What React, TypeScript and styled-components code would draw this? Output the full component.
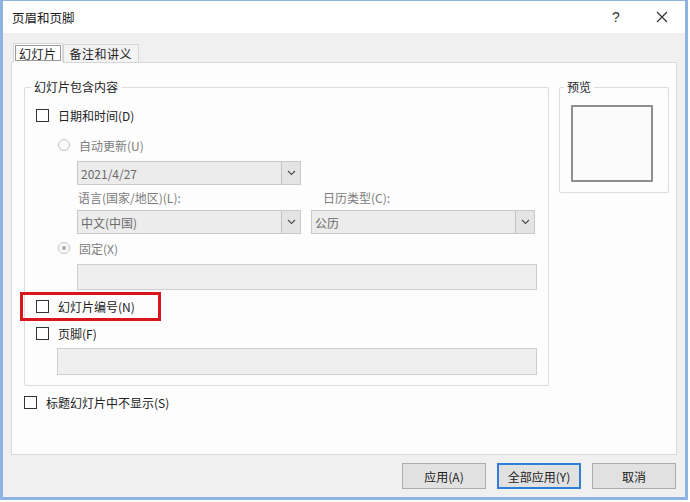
import React from 'react'
import styled, { createGlobalStyle } from 'styled-components'

const GlobalStyle = createGlobalStyle`
  html, body {
    margin: 0;
    padding: 0;
    background: #ffffff;
  }
  body {
    font-family: "Noto Sans CJK SC", "Liberation Sans", sans-serif;
    font-size: 12px;
    color: #262626;
  }
`

const Chevron = () => (
  <svg width="9" height="6" viewBox="0 0 9 6">
    <path d="M1 1 L4.5 4.5 L8 1" fill="none" stroke="#4a4a4a" strokeWidth="1.1" />
  </svg>
)

const App = () => {
  return (
    <>
      <GlobalStyle />
      <Window>
        <TitleBar>
          <Title>页眉和页脚</Title>
          <TitleActions>
            <TitleButton>?</TitleButton>
            <TitleButton>
              <svg width="12" height="12" viewBox="0 0 12 12">
                <path d="M1 1 L11 11 M11 1 L1 11" stroke="#333" strokeWidth="1.2" />
              </svg>
            </TitleButton>
          </TitleActions>
        </TitleBar>
        <Body>
          <TabStrip>
            <Tab active>幻灯片</Tab>
            <Tab>备注和讲义</Tab>
          </TabStrip>
          <Panel>
            <GroupRow>
              <MainGroup>
                <Legend offset={-5}>幻灯片包含内容</Legend>
                <CheckRow top={10}>
                  <CheckBox />
                  <Label>日期和时间(D)</Label>
                </CheckRow>
                <RadioRow top={10}>
                  <Radio />
                  <Label disabled>自动更新(U)</Label>
                </RadioRow>
                <SelectWrap top={6}>
                  <Select width={224}>
                    <SelectText>2021/4/27</SelectText>
                    <DropButton><Chevron /></DropButton>
                  </Select>
                </SelectWrap>
                <PairRow top={4}>
                  <SmallLabel width={234}>语言(国家/地区)(L):</SmallLabel>
                  <SmallLabel>日历类型(C):</SmallLabel>
                </PairRow>
                <PairRow top={4}>
                  <Select width={224}>
                    <SelectText>中文(中国)</SelectText>
                    <DropButton><Chevron /></DropButton>
                  </Select>
                  <Select width={224}>
                    <SelectText>公历</SelectText>
                    <DropButton><Chevron /></DropButton>
                  </Select>
                </PairRow>
                <RadioRow top={4}>
                  <Radio checked />
                  <Label disabled>固定(X)</Label>
                </RadioRow>
                <TextField indent={41} top={6} height={26} />
                <Highlighted>
                  <CheckRow top={0}>
                    <CheckBox />
                    <Label>幻灯片编号(N)</Label>
                  </CheckRow>
                  <RedMark />
                </Highlighted>
                <CheckRow top={7}>
                  <CheckBox />
                  <Label>页脚(F)</Label>
                </CheckRow>
                <TextField indent={21} top={5} height={27} />
              </MainGroup>
              <PreviewGroup>
                <Legend offset={-7}>预览</Legend>
                <PreviewBox />
              </PreviewGroup>
            </GroupRow>
            <CheckRow top={6}>
              <CheckBox />
              <Label>标题幻灯片中不显示(S)</Label>
            </CheckRow>
          </Panel>
          <ButtonRow>
            <Button>应用(A)</Button>
            <Button primary>全部应用(Y)</Button>
            <Button>取消</Button>
          </ButtonRow>
        </Body>
      </Window>
    </>
  )
}

export default App

const Window = styled.div`
  width: 688px;
  height: 500px;
  box-sizing: border-box;
  border: 1px solid #8db4e2;
  border-left-width: 3px;
  border-right-width: 3px;
  border-bottom-width: 3px;
  background: #f0f0f0;
  display: flex;
  flex-direction: column;
`

const TitleBar = styled.div`
  height: 32px;
  background: #ffffff;
  display: flex;
  align-items: center;
  justify-content: space-between;
  padding-left: 9px;
  flex-shrink: 0;
`

const Title = styled.div`
  font-size: 12.5px;
  color: #1a1a1a;
`

const TitleActions = styled.div`
  display: flex;
  align-items: center;
  height: 100%;
`

const TitleButton = styled.div`
  width: 46px;
  height: 100%;
  display: flex;
  align-items: center;
  justify-content: center;
  font-family: "Liberation Sans", sans-serif;
  font-size: 14px;
  color: #333;
`

const Body = styled.div`
  flex: 1;
  padding: 10px 8px 0 8px;
  display: flex;
  flex-direction: column;
`

const TabStrip = styled.div`
  display: flex;
  align-items: flex-end;
  height: 20px;
  padding-left: 2px;
  position: relative;
  z-index: 1;
`

const Tab = styled.div<{ active?: boolean }>`
  height: ${({ active }) => (active ? '20px' : '19px')};
  box-sizing: border-box;
  padding: 0 ${({ active }) => (active ? '5px' : '6px')};
  display: flex;
  align-items: center;
  border: 1px solid #d6d6d6;
  border-bottom: ${({ active }) => (active ? '1px solid #fdfdfd' : '1px solid #d6d6d6')};
  background: ${({ active }) => (active ? '#fdfdfd' : '#f3f3f3')};
  color: #222;
  font-size: 12px;
  letter-spacing: 0.5px;
  ${({ active }) => active && 'outline: 1px solid #9a9a9a; outline-offset: -3px; border-radius: 1px;'}
`

const Panel = styled.div`
  width: 666px;
  height: 393px;
  box-sizing: border-box;
  margin-top: -1px;
  background: #fdfdfd;
  border: 1px solid #dadada;
  padding: 16px 7px 0 12px;
  flex-shrink: 0;
`

const GroupRow = styled.div`
  display: flex;
  gap: 10px;
  align-items: flex-start;
`

const Fieldset = styled.fieldset`
  margin: 0;
  border: 1px solid #dcdcdc;
  border-radius: 2px;
  min-width: 0;
  box-sizing: border-box;
`

const MainGroup = styled(Fieldset)`
  width: 525px;
  padding: 0 11px 10px 11px;
`

const PreviewGroup = styled(Fieldset)`
  width: 110px;
  padding: 0 0 10px 11px;
`

const Legend = styled.legend<{ offset: number }>`
  padding: 0 3px;
  margin-left: ${({ offset }) => offset}px;
  font-size: 12px;
  line-height: 16px;
  color: #222;
`

const PreviewBox = styled.div`
  width: 82px;
  height: 77px;
  box-sizing: border-box;
  margin-top: 10px;
  border: 2px solid #8e8e8e;
  background: #fbfbfb;
  border-radius: 1px;
`

const CheckRow = styled.div<{ top: number }>`
  display: flex;
  align-items: center;
  height: 20px;
  margin-top: ${({ top }) => top}px;
  gap: 9px;
`

const RadioRow = styled.div<{ top: number }>`
  display: flex;
  align-items: center;
  height: 20px;
  margin-top: ${({ top }) => top}px;
  padding-left: 22px;
  gap: 9px;
`

const CheckBox = styled.span`
  width: 13px;
  height: 13px;
  box-sizing: border-box;
  border: 1px solid #333;
  background: #fff;
  flex-shrink: 0;
`

const Radio = styled.span<{ checked?: boolean }>`
  width: 12px;
  height: 12px;
  box-sizing: border-box;
  border: 1px solid #c4c4c4;
  border-radius: 50%;
  background: #fafafa;
  flex-shrink: 0;
  display: flex;
  align-items: center;
  justify-content: center;
  &::after {
    content: '';
    width: 4px;
    height: 4px;
    border-radius: 50%;
    background: ${({ checked }) => (checked ? '#a8a8a8' : 'transparent')};
  }
`

const Label = styled.span<{ disabled?: boolean }>`
  font-size: 12px;
  color: ${({ disabled }) => (disabled ? '#7c7c7c' : '#222')};
  white-space: nowrap;
`

const SmallLabel = styled.span<{ width?: number }>`
  font-size: 12px;
  color: #7c7c7c;
  padding-left: 1px;
  ${({ width }) => width && `width: ${width}px;`}
`

const SelectWrap = styled.div<{ top: number }>`
  margin-top: ${({ top }) => top}px;
  padding-left: 41px;
`

const PairRow = styled.div<{ top: number }>`
  display: flex;
  align-items: center;
  gap: 10px;
  margin-top: ${({ top }) => top}px;
  padding-left: 41px;
  min-height: 16px;
`

const Select = styled.div<{ width: number }>`
  width: ${({ width }) => width}px;
  height: 24px;
  box-sizing: border-box;
  border: 1px solid #c9c9c9;
  background: #ececec;
  display: flex;
  align-items: stretch;
`

const SelectText = styled.span`
  flex: 1;
  display: flex;
  align-items: center;
  padding-left: 3px;
  font-size: 12px;
  color: #6a6a6a;
`

const DropButton = styled.span`
  width: 18px;
  border-left: 1px solid #c2c2c2;
  background: #e4e4e4;
  display: flex;
  align-items: center;
  justify-content: center;
`

const TextField = styled.div<{ indent: number; top: number; height: number }>`
  margin-top: ${({ top }) => top}px;
  margin-left: ${({ indent }) => indent}px;
  height: ${({ height }) => height}px;
  box-sizing: border-box;
  border: 1px solid #cfcfcf;
  background: #efefef;
`

const Highlighted = styled.div`
  position: relative;
  padding-top: 6px;
`

const RedMark = styled.div`
  position: absolute;
  left: -16px;
  top: 2px;
  width: 141px;
  height: 29px;
  box-sizing: border-box;
  border: 3px solid #d8161c;
`

const ButtonRow = styled.div`
  display: flex;
  justify-content: flex-end;
  gap: 11px;
  margin-top: 8px;
  padding-right: 1px;
`

const Button = styled.div<{ primary?: boolean }>`
  width: 84px;
  height: 26px;
  box-sizing: border-box;
  border: ${({ primary }) => (primary ? '2px solid #2f7fd6' : '1px solid #adadad')};
  background: #e1e1e1;
  display: flex;
  align-items: center;
  justify-content: center;
  font-size: 12px;
  color: #222;
`
